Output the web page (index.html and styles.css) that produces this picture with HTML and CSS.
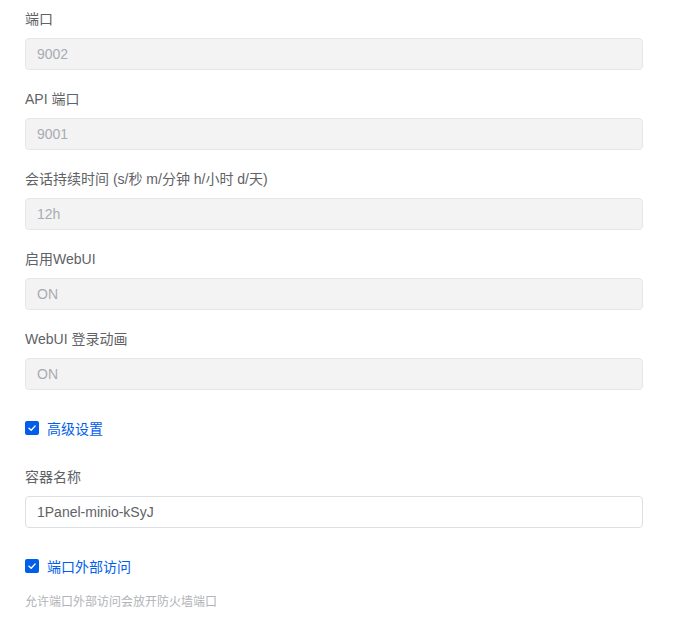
FILE: index.html
```html
<!DOCTYPE html>
<html lang="zh-CN">
<head>
    <meta charset="UTF-8">
    <title>MinIO 参数</title>
    <link rel="stylesheet" href="styles.css">
</head>
<body>
    <form class="param-form">
        <div class="form-item">
            <label class="form-label">端口</label>
            <div class="input disabled">9002</div>
        </div>
        <div class="form-item">
            <label class="form-label">API 端口</label>
            <div class="input disabled">9001</div>
        </div>
        <div class="form-item">
            <label class="form-label">会话持续时间 (s/秒 m/分钟 h/小时 d/天)</label>
            <div class="input disabled">12h</div>
        </div>
        <div class="form-item">
            <label class="form-label">启用WebUI</label>
            <div class="input disabled">ON</div>
        </div>
        <div class="form-item">
            <label class="form-label">WebUI 登录动画</label>
            <div class="input disabled">ON</div>
        </div>

        <div class="form-item check-item">
            <label class="checkbox">
                <span class="check-box">
                    <svg viewBox="0 0 14 14" fill="none" stroke="currentColor" stroke-width="1.4" stroke-linecap="round" stroke-linejoin="round">
                        <polyline points="4 7.2 6.2 9.3 10.2 4.9"></polyline>
                    </svg>
                </span>
                <span class="check-label">高级设置</span>
            </label>
        </div>

        <div class="form-item">
            <label class="form-label">容器名称</label>
            <div class="input">1Panel-minio-kSyJ</div>
        </div>

        <div class="form-item check-item">
            <label class="checkbox">
                <span class="check-box">
                    <svg viewBox="0 0 14 14" fill="none" stroke="currentColor" stroke-width="1.4" stroke-linecap="round" stroke-linejoin="round">
                        <polyline points="4 7.2 6.2 9.3 10.2 4.9"></polyline>
                    </svg>
                </span>
                <span class="check-label">端口外部访问</span>
            </label>
            <div class="form-help">允许端口外部访问会放开防火墙端口</div>
        </div>
    </form>
</body>
</html>
```

FILE: styles.css
```css
:root {
    --primary-color: #005eeb;
    --label-color: #606266;
    --text-color: #606266;
    --disabled-text: #a8abb2;
    --disabled-bg: #f3f3f4;
    --disabled-border: #e4e7ed;
    --border-color: #dcdfe6;
    --help-color: #b1b3b8;
}

* {
    margin: 0;
    padding: 0;
    box-sizing: border-box;
}

body {
    background-color: #ffffff;
    font-family: "Liberation Sans", "Noto Sans CJK SC", sans-serif;
    font-size: 14px;
    color: var(--text-color);
}

.param-form {
    width: 668px;
    padding: 8px 25px 0 25px;
    display: flex;
    flex-direction: column;
}

.form-item {
    display: flex;
    flex-direction: column;
    margin-bottom: 18px;
}

.form-label {
    line-height: 22px;
    height: 22px;
    margin-bottom: 8px;
    color: var(--label-color);
}

.input {
    height: 32px;
    line-height: 30px;
    padding: 0 11px;
    border: 1px solid var(--border-color);
    border-radius: 4px;
    background-color: #ffffff;
    color: var(--text-color);
}

.input.disabled {
    background-color: var(--disabled-bg);
    border-color: var(--disabled-border);
    color: var(--disabled-text);
}

.check-item {
    margin-bottom: 18px;
}

.checkbox {
    display: flex;
    align-items: center;
    height: 40px;
    cursor: pointer;
}

.check-box {
    width: 14px;
    height: 14px;
    border-radius: 2px;
    background-color: var(--primary-color);
    color: #ffffff;
    display: flex;
    justify-content: center;
    align-items: center;
}

.check-box svg {
    width: 14px;
    height: 14px;
}

.check-label {
    margin-left: 8px;
    color: var(--primary-color);
}

.form-help {
    font-size: 12px;
    line-height: 20px;
    margin-top: 6px;
    color: var(--help-color);
}
```
